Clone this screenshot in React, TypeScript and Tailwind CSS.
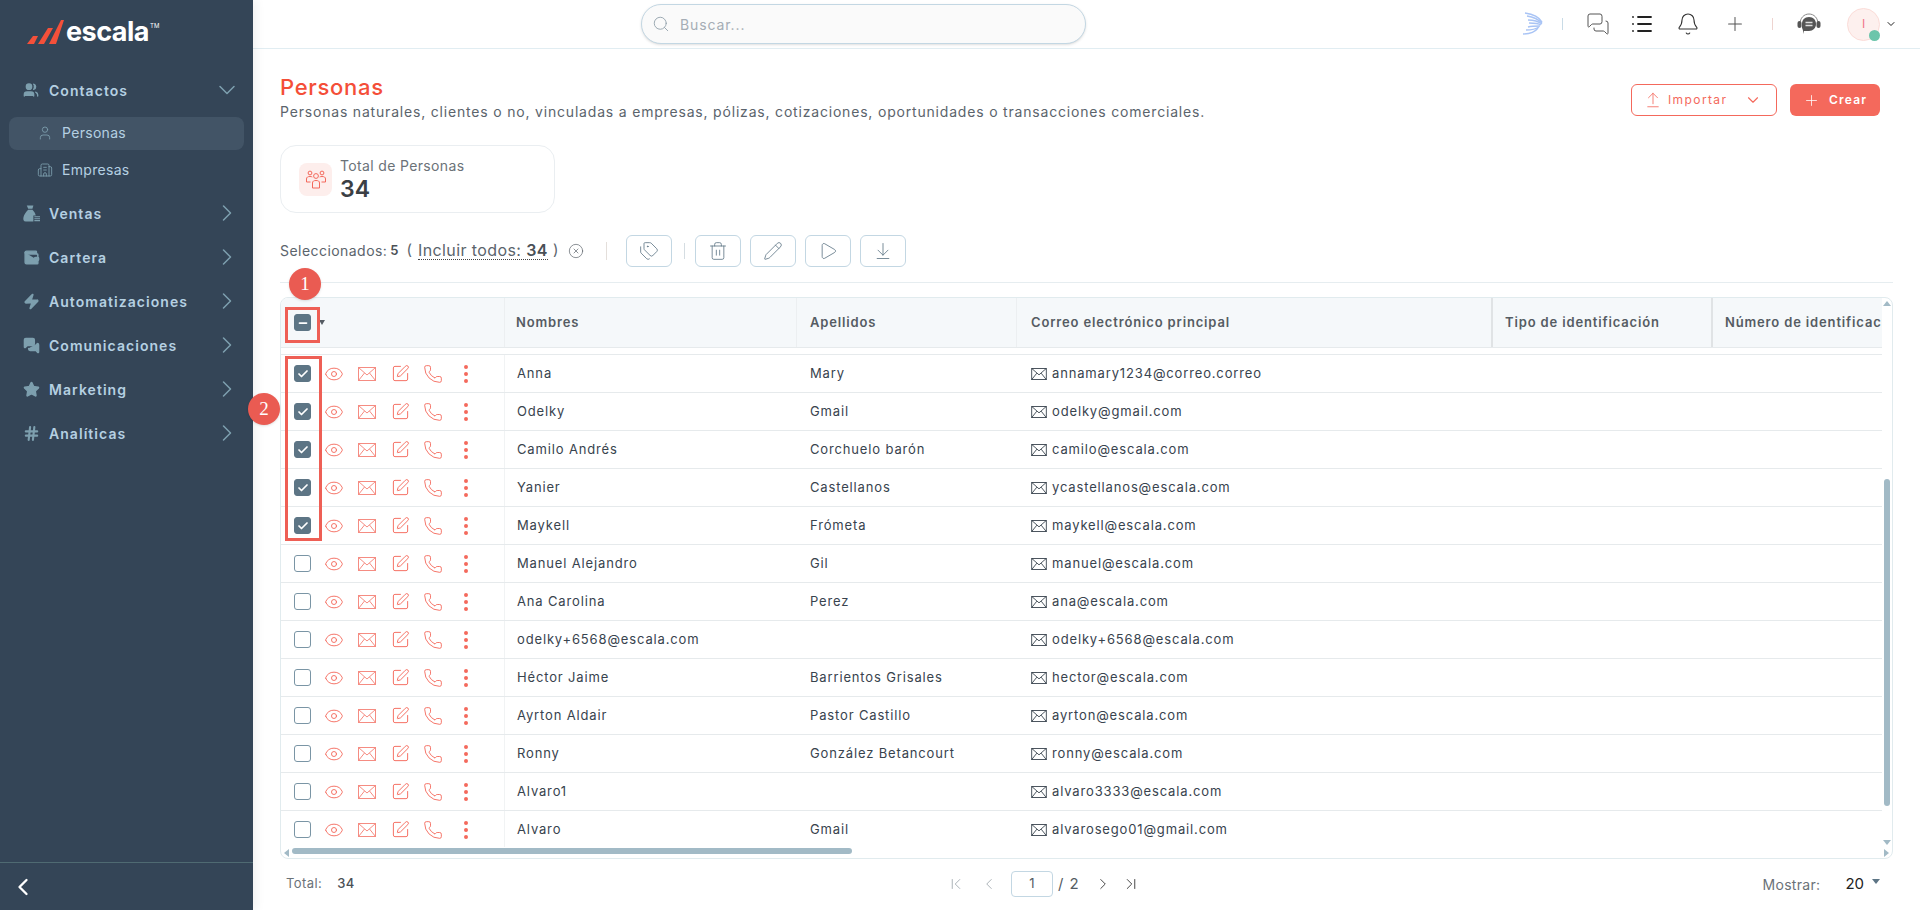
import React from 'react';
import {
  Search, ChevronDown, ChevronRight, ChevronLeft, ChevronFirst, ChevronLast, User, Building2, Users, Wallet, Zap,
  MessagesSquare, Star, Hash, Eye, SquarePen, Phone, MoreVertical, Check, Minus, Tags, Trash2, Pencil, Play,
  ArrowDownToLine, ArrowUpFromLine, XCircle, Plus, Bell, List,
} from 'lucide-react';

const FONT = "font-['Inter','Noto_Sans',sans-serif]";

const rows = [
  { nombre: 'Anna', apellido: 'Mary', correo: 'annamary1234@correo.correo', checked: true },
  { nombre: 'Odelky', apellido: 'Gmail', correo: 'odelky@gmail.com', checked: true },
  { nombre: 'Camilo Andrés', apellido: 'Corchuelo barón', correo: 'camilo@escala.com', checked: true },
  { nombre: 'Yanier', apellido: 'Castellanos', correo: 'ycastellanos@escala.com', checked: true },
  { nombre: 'Maykell', apellido: 'Frómeta', correo: 'maykell@escala.com', checked: true },
  { nombre: 'Manuel Alejandro', apellido: 'Gil', correo: 'manuel@escala.com', checked: false },
  { nombre: 'Ana Carolina', apellido: 'Perez', correo: 'ana@escala.com', checked: false },
  { nombre: 'odelky+6568@escala.com', apellido: '', correo: 'odelky+6568@escala.com', checked: false },
  { nombre: 'Héctor Jaime', apellido: 'Barrientos Grisales', correo: 'hector@escala.com', checked: false },
  { nombre: 'Ayrton Aldair', apellido: 'Pastor Castillo', correo: 'ayrton@escala.com', checked: false },
  { nombre: 'Ronny', apellido: 'González Betancourt', correo: 'ronny@escala.com', checked: false },
  { nombre: 'Alvaro1', apellido: '', correo: 'alvaro3333@escala.com', checked: false },
  { nombre: 'Alvaro', apellido: 'Gmail', correo: 'alvarosego01@gmail.com', checked: false },
];

const MoneyBag = ({ size, className }: { size: number; className?: string }) => (
  <svg width={size} height={size} viewBox="0 0 18 18" className={className}>
    <path d="M4 0.5 H11 L10 4 H5.5 Z" fill="currentColor" />
    <path d="M5.5 5 H10 C12 7 13 9 13.5 11 H11 V17.5 H3 C0.5 17.5 0 15.5 0.5 13 C1 10 3.5 7 5.5 5 Z" fill="currentColor" />
    <path d="M12 12.5 H18 M12 14.5 H18 M12 16.5 H18" stroke="currentColor" strokeWidth="1.2" />
  </svg>
);

const menu = [
  { label: 'Ventas', icon: MoneyBag },
  { label: 'Cartera', icon: Wallet },
  { label: 'Automatizaciones', icon: Zap },
  { label: 'Comunicaciones', icon: MessagesSquare },
  { label: 'Marketing', icon: Star },
];

const Logo = () => (
  <div className="flex items-center gap-[2px]">
    <svg width="38" height="26" viewBox="0 0 38 26">
      <path d="M1 25 L7 17 H12 L8 25 Z M12 25 L22 9 H27 L18 25 Z M23 25 L35 1 H38 L30 25 Z" fill="#f4503a" />
    </svg>
    <span className="text-[27px] font-bold leading-none tracking-[-0.5px] text-white">escala</span>
    <span className="-ml-[1px] -mt-3 text-[6px] leading-none text-white">TM</span>
  </div>
);

const Envelope = ({ w, h, className }: { w: number; h: number; className?: string }) => (
  <svg width={w} height={h} viewBox="0 0 18 14" fill="none" stroke="currentColor" strokeWidth="1" className={className}>
    <rect x="0.5" y="0.5" width="17" height="13" />
    <path d="M0.5 0.5 L9 8 L17.5 0.5 M0.5 13.5 L6.5 6 M17.5 13.5 L11.5 6" />
  </svg>
);

const Wing = () => (
  <svg width="22" height="24" viewBox="0 0 22 24" fill="none" stroke="#a9c4f5" strokeWidth="1.4">
    <path d="M3 1 C10 2 17 5 20 10" />
    <path d="M5 4 C11 5 16 7 20 11" />
    <path d="M6 8 C11 8 16 9 20 12" />
    <path d="M7 11 C11 11 16 11 19 13" />
    <path d="M6 15 C10 14 15 14 18 14" />
    <path d="M4 18 C9 18 14 17 17 15" />
    <path d="M1 22 C8 22 13 20 16 16" />
  </svg>
);

const SupportIcon = () => (
  <svg width="24" height="24" viewBox="0 0 24 24" fill="none">
    <path d="M3 12 C3 6 7 2 12 2 C17 2 21 6 21 12" stroke="#8a8a8a" strokeWidth="1" />
    <rect x="0.5" y="9" width="4" height="7" rx="2" fill="#555" />
    <rect x="19.5" y="9" width="4" height="7" rx="2" fill="#555" />
    <path d="M12 5 C16.5 5 19 8 19 12 C19 16 16 19 12 19 H7 L7 22 L5.5 17 C4.5 15.5 5 14 5 12 C5 8 7.5 5 12 5 Z" fill="#555" />
    <path d="M8.5 10.5 H15.5 M8.5 13.5 H15.5" stroke="#ddd" strokeWidth="1.5" />
  </svg>
);

const GroupIcon = () => (
  <svg width="22" height="22" viewBox="0 0 22 22" fill="none" stroke="#f4695c" strokeWidth="1">
    <circle cx="11" cy="8" r="2.4" />
    <path d="M7.5 20 V15 C7.5 13 9 12.5 11 12.5 C13 12.5 14.5 13 14.5 15 V20 Z" />
    <circle cx="5" cy="5" r="1.9" />
    <circle cx="17" cy="5" r="1.9" />
    <path d="M1.5 14 V11 C1.5 9 3 8.5 5 8.5 C6 8.5 6.8 8.7 7.3 9" />
    <path d="M20.5 14 V11 C20.5 9 19 8.5 17 8.5 C16 8.5 15.2 8.7 14.7 9" />
    <path d="M1.5 14 H5.5 M20.5 14 H16.5" />
  </svg>
);

const Sidebar = () => (
  <aside className="z-10 flex h-full w-[253px] shrink-0 flex-col bg-[#344557] shadow-[3px_0_10px_rgba(0,0,0,0.06)]">
    <div className="flex h-[58px] items-end pl-[26px] pb-[13px]">
      <Logo />
    </div>
    <div className="mt-[17px] flex h-[30px] items-center pl-[23px] pr-[12px]">
      <Users size={16} fill="#7d9fae" className="text-[#7d9fae]" />
      <span className="ml-[10px] flex-1 text-[14px] font-semibold tracking-[1.05px] text-[#b5d0e2]">Contactos</span>
      <ChevronDown size={28} strokeWidth={1.3} className="text-[#7d9fae]" />
    </div>
    <div className="mx-[9px] mt-[12px] flex h-[33px] items-center rounded-lg bg-[#425466] pb-[2px] pl-[28px]">
      <User size={16} strokeWidth={1.3} className="text-[#7d9fae]" />
      <span className="ml-[9px] text-[14px] tracking-[0.3px] text-[#b5d0e2]">Personas</span>
    </div>
    <div className="mx-[9px] mt-[4px] flex h-[33px] items-center pb-[2px] pl-[28px]">
      <Building2 size={16} strokeWidth={1.3} className="text-[#7d9fae]" />
      <span className="ml-[9px] text-[14px] tracking-[0.3px] text-[#b5d0e2]">Empresas</span>
    </div>
    <div className="mt-[11px] flex flex-col gap-[14px]">
      {menu.map((m) => (
        <div key={m.label} className="flex h-[30px] items-center pl-[23px] pr-[12px]">
          <m.icon size={17} fill="#7d9fae" className="text-[#7d9fae]" />
          <span className="ml-[9px] flex-1 text-[14px] font-semibold tracking-[1.05px] text-[#b5d0e2]">{m.label}</span>
          <ChevronRight size={28} strokeWidth={1.3} className="text-[#7d9fae]" />
        </div>
      ))}
      <div className="flex h-[30px] items-center pl-[23px] pr-[12px]">
        <Hash size={17} strokeWidth={3} className="text-[#7d9fae]" />
        <span className="ml-[9px] flex-1 text-[14px] font-semibold tracking-[1.05px] text-[#b5d0e2]">Analíticas</span>
        <ChevronRight size={28} strokeWidth={1.3} className="text-[#7d9fae]" />
      </div>
    </div>
    <div className="mt-auto flex h-[48px] items-center border-t border-[#4f6a72] pl-[9px]">
      <ChevronLeft size={28} strokeWidth={2} className="text-white" />
    </div>
  </aside>
);

const TopBar = () => (
  <header className="flex h-[49px] shrink-0 items-center border-b border-[#e1edf2] bg-white">
    <div className="ml-[388px] flex h-[40px] w-[445px] items-center rounded-full border border-[#c3d7e3] bg-[#fafafa] pl-[10px] shadow-sm">
      <Search size={18} strokeWidth={1.1} className="text-[#8a9aa5]" />
      <span className="ml-[10px] text-[14px] tracking-[0.9px] text-[#a5adb5]">Buscar...</span>
    </div>
    <div className="ml-[436px] flex items-center">
      <Wing />
      <div className="ml-[18px] h-[12px] w-px bg-[#c9dbe6]" />
      <MessagesSquare size={24} strokeWidth={1} className="ml-[23px] text-[#555]" />
      <List size={24} strokeWidth={1.8} className="ml-[20px] text-[#222]" />
      <Bell size={24} strokeWidth={1.1} className="ml-[22px] text-[#333]" />
      <Plus size={22} strokeWidth={1.1} className="ml-[24px] text-[#555]" />
      <div className="ml-[26px] h-[12px] w-px bg-[#eed4d0]" />
      <div className="ml-[24px]"><SupportIcon /></div>
      <div className="relative ml-[26px] flex h-[33px] w-[33px] items-center justify-center rounded-full border border-[#fbdcd8] bg-[#fdf0ee]">
        <span className="text-[12px] text-[#f0708a]">I</span>
        <span className="absolute -bottom-[1px] -right-[1px] h-[11px] w-[11px] rounded-full bg-[#6cc5ab]" />
      </div>
      <ChevronDown size={12} strokeWidth={2} className="ml-[5px] text-[#222]" />
    </div>
  </header>
);

const ToolButton = ({ icon: Icon }: { icon: typeof Tags }) => (
  <button className="flex h-[32px] w-[46px] items-center justify-center rounded-md border border-[#c3d7e3] bg-white">
    <Icon size={20} strokeWidth={1} className="text-[#5f7686]" />
  </button>
);

const Checkbox = ({ checked, minus }: { checked?: boolean; minus?: boolean }) => (
  <div className={`flex h-[17px] w-[17px] shrink-0 items-center justify-center rounded-[3px] border ${checked || minus ? 'border-[#5d7585] bg-[#5d7585]' : 'border-[#7a95a5] bg-white'}`}>
    {checked && <Check size={12} strokeWidth={3.5} className="text-white" />}
    {minus && <Minus size={12} strokeWidth={3.5} className="text-white" />}
  </div>
);

const HeaderCell = ({ label, w, pad, line }: { label: string; w: string; pad: string; line?: boolean }) => (
  <div className={`flex h-full shrink-0 items-center overflow-hidden whitespace-nowrap text-[13px] font-semibold tracking-[0.85px] text-[#555c63] ${w} ${pad} ${line ? 'border-r-2 border-[#e0e3e5]' : 'border-r border-[#eceff1]'}`}>
    {label}
  </div>
);

const Row = ({ r }: { r: (typeof rows)[number] }) => (
  <div className="flex h-[38px] shrink-0 items-center border-b border-[#e6eaec] text-[13px] tracking-[0.85px] text-[#38434e]">
    <div className="flex h-full w-[224px] shrink-0 items-center border-r border-[#f1f3f4] pl-[13px]">
      <Checkbox checked={r.checked} />
      <Eye size={20} strokeWidth={1.1} className="ml-[13px] text-[#f4695c]" />
      <Envelope w={18} h={14} className="ml-[14px] text-[#f58c82]" />
      <SquarePen size={19} strokeWidth={1.2} className="ml-[15px] text-[#f4695c]" />
      <Phone size={20} strokeWidth={1.1} className="ml-[13px] text-[#f4695c]" />
      <MoreVertical size={24} strokeWidth={2} className="ml-[11px] text-[#f4695c]" />
    </div>
    <div className="w-[292px] shrink-0 pl-[12px]">{r.nombre}</div>
    <div className="w-[220px] shrink-0 pl-[13px]">{r.apellido}</div>
    <div className="flex shrink-0 items-center pl-[14px]">
      <Envelope w={16} h={12} className="mr-[5px] text-[#2f3a45]" />
      {r.correo}
    </div>
  </div>
);

const Badge = ({ n, className }: { n: string; className: string }) => (
  <div className={`absolute z-20 flex h-[32px] w-[32px] items-center justify-center rounded-full bg-[#ea5b52] font-['Liberation_Serif',serif] text-[19px] text-white shadow ${className}`}>
    {n}
  </div>
);

const PersonasTable = () => (
  <div className="relative mt-[14px] flex h-[562px] flex-col overflow-hidden rounded-lg border border-[#e1ebee] bg-white">
    <div className="flex min-h-0 flex-1">
      <div className="min-w-0 flex-1 overflow-hidden">
        <div className="flex h-[50px] items-center border-b border-[#e6eaec] bg-[#f5f8fa]">
          <div className="flex h-full w-[224px] shrink-0 items-center border-r border-[#eceff1] pl-[13px]">
            <Checkbox minus />
            <span className="ml-[8px] h-0 w-0 border-x-[3.5px] border-t-[5px] border-x-transparent border-t-[#555c63]" />
          </div>
          <HeaderCell label="Nombres" w="w-[292px]" pad="pl-[11px]" />
          <HeaderCell label="Apellidos" w="w-[220px]" pad="pl-[13px]" />
          <HeaderCell label="Correo electrónico principal" w="w-[476px]" pad="pl-[14px]" line />
          <HeaderCell label="Tipo de identificación" w="w-[220px]" pad="pl-[12px]" line />
          <HeaderCell label="Número de identificación" w="w-[200px]" pad="pl-[12px]" />
        </div>
        <div className="h-[7px] border-b border-[#e6eaec]" />
        {rows.map((r) => (
          <Row key={r.correo} r={r} />
        ))}
      </div>
      <div className="relative w-[10px] shrink-0">
        <span className="absolute left-[1px] top-[3px] h-0 w-0 border-x-[4px] border-b-[5px] border-x-transparent border-b-[#a2bac6]" />
        <div className="absolute left-[2px] top-[181px] h-[327px] w-[6px] rounded-full bg-[#a2bac6]" />
        <span className="absolute bottom-[2px] left-[1px] h-0 w-0 border-x-[4px] border-t-[5px] border-x-transparent border-t-[#a2bac6]" />
      </div>
    </div>
    <div className="relative h-[11px] shrink-0">
      <span className="absolute left-[3px] top-[2px] h-0 w-0 border-y-[4px] border-r-[5px] border-y-transparent border-r-[#a2bac6]" />
      <div className="absolute left-[11px] top-[1px] h-[6px] w-[560px] rounded-full bg-[#a2bac6]" />
      <span className="absolute right-[3px] top-[2px] h-0 w-0 border-y-[4px] border-l-[5px] border-y-transparent border-l-[#a2bac6]" />
    </div>
  </div>
);

export default function App() {
  return (
    <div className={`flex h-[910px] w-[1920px] overflow-hidden bg-white ${FONT}`}>
      <Sidebar />
      <div className="flex min-w-0 flex-1 flex-col">
        <TopBar />
        <main className="relative flex-1 pl-[27px] pr-[27px]">
          <div className="mt-[25px] flex items-start justify-between">
            <div>
              <h1 className="text-[22px] font-medium leading-[27px] tracking-[0.7px] text-[#f44e38]">Personas</h1>
              <p className="mt-[2px] text-[14px] leading-[18px] tracking-[0.81px] text-[#5b646c]">
                Personas naturales, clientes o no, vinculadas a empresas, pólizas, cotizaciones, oportunidades o transacciones comerciales.
              </p>
            </div>
            <div className="mr-[13px] mt-[10px] flex gap-[13px]">
              <button className="flex h-[32px] w-[146px] items-center rounded-md border border-[#f4695c] bg-white pl-[12px] text-[12px] tracking-[1.4px] text-[#f4695c]">
                <ArrowUpFromLine size={18} strokeWidth={1.1} />
                <span className="ml-[6px] flex-1 text-left">Importar</span>
                <ChevronDown size={18} strokeWidth={1.5} className="mr-[14px]" />
              </button>
              <button className="flex h-[32px] w-[90px] items-center rounded-md bg-[#f4695c] pl-[13px] text-[12px] font-semibold tracking-[1.2px] text-white">
                <Plus size={17} strokeWidth={1.1} />
                <span className="ml-[9px]">Crear</span>
              </button>
            </div>
          </div>
          <div className="mt-[24px] flex h-[68px] w-[275px] items-center rounded-2xl border border-[#eaeef1] pl-[18px]">
            <div className="flex h-[33px] w-[33px] items-center justify-center rounded-lg bg-[#fdeeec]">
              <GroupIcon />
            </div>
            <div className="ml-[8px] mt-[1px]">
              <div className="text-[14px] leading-[17px] tracking-[0.35px] text-[#6b7278]">Total de Personas</div>
              <div className="mt-[2px] text-[23px] font-semibold leading-[27px] text-[#3b3f44]">34</div>
            </div>
          </div>
          <div className="mt-[21px] flex h-[33px] items-center">
            <span className="text-[14px] tracking-[0.45px] text-[#5b646c]">Seleccionados:</span>
            <span className="ml-[3px] text-[13px] font-semibold text-[#4a5056]">5</span>
            <span className="ml-[8px] text-[15px] text-[#5b646c]">(</span>
            <span className="ml-[6px] border-b border-dotted border-[#444] text-[16px] leading-[18px] tracking-[0.4px] text-[#5b646c]">
              Incluir todos: <span className="font-semibold text-[#4a5056]">34</span>
            </span>
            <span className="ml-[5px] text-[15px] text-[#5b646c]">)</span>
            <XCircle size={16} strokeWidth={1} className="ml-[10px] text-[#555c63]" />
            <div className="ml-[22px] h-[18px] w-px bg-[#e4dfdb]" />
            <div className="ml-[19px]"><ToolButton icon={Tags} /></div>
            <div className="ml-[12px] h-[16px] w-px bg-[#d5dde2]" />
            <div className="ml-[10px] flex gap-[9px]">
              <ToolButton icon={Trash2} />
              <ToolButton icon={Pencil} />
              <ToolButton icon={Play} />
              <ToolButton icon={ArrowDownToLine} />
            </div>
          </div>
          <div className="mt-[15px] h-px bg-[#e6edf0]" />
          <PersonasTable />
          <div className="mt-[12px] flex items-center text-[13px]">
            <div className="w-[490px] pl-[6px] tracking-[0.4px] text-[#6b7278]">
              Total: <span className="ml-[11px] font-medium text-[#4a5056]">34</span>
            </div>
            <div className="flex items-center text-[#555c63]">
              <ChevronFirst size={18} strokeWidth={1.1} className="ml-[177px] text-[#9aa3a9]" />
              <ChevronLeft size={18} strokeWidth={1.1} className="ml-[15px] text-[#9aa3a9]" />
              <div className="ml-[13px] flex h-[26px] w-[42px] items-center justify-center rounded border border-[#c3d7e3]">1</div>
              <span className="ml-[5px] text-[15px] tracking-[1px]">/ 2</span>
              <ChevronRight size={18} strokeWidth={1.3} className="ml-[14px] text-[#444]" />
              <ChevronLast size={18} strokeWidth={1.3} className="ml-[10px] text-[#444]" />
            </div>
            <div className="ml-auto mr-[13px] flex items-center">
              <span className="text-[14px] tracking-[0.3px] text-[#6b7278]">Mostrar:</span>
              <span className="ml-[25px] text-[15px] text-[#222]">20</span>
              <span className="mb-[6px] ml-[8px] h-0 w-0 border-x-[4px] border-t-[5px] border-x-transparent border-t-[#5d7585]" />
            </div>
          </div>

          {/* anotaciones */}
          <Badge n="1" className="left-[36px] top-[219px]" />
          <Badge n="2" className="left-[-5px] top-[344px]" />
          <div className="absolute left-[32px] top-[258px] z-10 h-[36px] w-[35px] border-[3px] border-[#ee5f55]" />
          <div className="absolute left-[32px] top-[307px] z-10 h-[185px] w-[37px] border-[3px] border-[#ee5f55]" />
        </main>
      </div>
    </div>
  );
}
